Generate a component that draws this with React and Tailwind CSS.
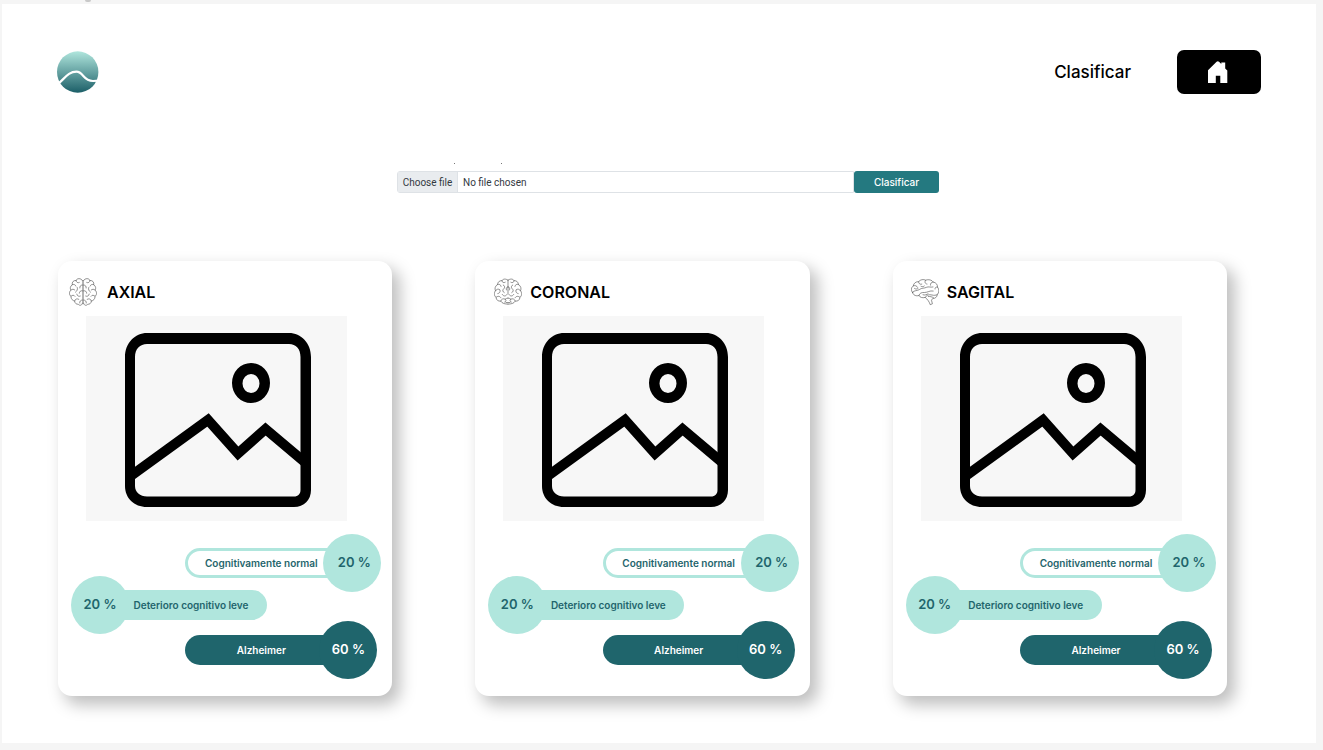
import React from "react";

function Logo() {
  return (
    <svg viewBox="0 0 42 42" className="size-[42px]" role="img" aria-label="Inicio">
      <defs>
        <linearGradient id="logo-fill" x1="0" y1="0" x2="0" y2="1">
          <stop offset="0" stopColor="#b0e6dd" />
          <stop offset="1" stopColor="#1c5f68" />
        </linearGradient>
      </defs>
      <circle cx="20.700" cy="21" r="20.700" fill="url(#logo-fill)" />
      <path
        d="M1 33C8 27 11.5 20.700 19.500 20.700C26.500 20.700 26 30 36 30L42 29.700"
        fill="none"
        stroke="#fff"
        strokeWidth="2.200"
      />
    </svg>
  );
}

function HomeIcon() {
  return (
    <svg viewBox="0 0 20 22" className="h-[22px] w-5" fill="#fff" aria-hidden="true">
      <path d="M0 9.300L8.600 .7Q9.800-.4 11 .7L13.300 3V1.600H17.200V7.500L19.300 9.600V22H12.300V14.700H7.800V22H0Z" />
    </svg>
  );
}

const brainProps = {
  viewBox: "0 0 28 28",
  className: "size-7 shrink-0",
  fill: "none",
  stroke: "#4b4b4b",
  strokeWidth: "0.6",
  strokeLinecap: "round",
  strokeLinejoin: "round",
  "aria-hidden": true,
};

function AxialHalf() {
  return (
    <>
      <path d="M13.400 2.500C12-.2 7.700.2 7.100 2.500C4.400 2.200 2.600 4.400 3.300 6.700C1.100 8.100.9 10.600 1.900 12.200C-.2 13.800.2 17.300 2 18.300C1.800 21.200 4 22.800 5.600 22.900C5.800 25.300 7.500 26.500 9.200 26.200C10.600 28.100 13.300 27.400 13.400 25.200" />
      <path d="M7.100 2.500C7.200 4.300 8.700 5.300 10.300 4.500M3.300 6.700C4.700 5.900 6.300 6.500 6.900 8.100M13.500 7C11.500 7 10.600 8.300 10.800 10M1.900 12.200C3 10.800 4.800 11 5.800 12M8.300 9.500C9 11.500 8 13 6.500 14.200M13.500 12.800C11.600 12.400 10.300 13.500 10.300 15.200M2 18.300C3.200 16.700 5.100 16.900 6 18.300M7.800 16.100C8 18 9.700 18.800 11.300 18.100M5.600 22.900C6.100 20.900 8.100 20.300 9.800 21.300M13.400 22C11.600 22 10.300 23.500 10.700 25" />
    </>
  );
}

function AxialIcon() {
  return (
    <svg {...brainProps}>
      <AxialHalf />
      <g transform="translate(28 0) scale(-1 1)">
        <AxialHalf />
      </g>
      <path d="M14 2.500V25.500" strokeWidth="1" stroke="#6b6b6b" />
    </svg>
  );
}

function CoronalHalf() {
  return (
    <>
      <path d="M14 2.200C11.700.4 9 .8 7.900 2.700C5.400 2.500 3.600 4.200 3.600 6.500C1.200 7.800.4 10.600 1.500 12.800C-.4 15.100.3 18.200 2.100 19.300C2.200 22.100 4.400 23.600 6.700 23C8.100 25.600 11 26.100 14 26.100" />
      <path d="M7.900 2.700C8 4.500 9.700 5.200 11.200 4.300M3.600 6.500C5.300 5.800 6.900 6.700 7.100 8.400M1.500 12.800C2.300 11 4.600 10.600 6 11.900C6.500 13.900 5.500 15.400 3.800 15.600M9.300 7C10.900 7.600 11.100 9.600 9.800 10.800C8.300 11.800 8.400 13.900 10.200 14.600M14 8.800C12.300 9 11.700 10.500 12.500 12M2.100 19.300C3.600 17.700 6.200 18 6.900 19.800M8.300 16.500C9.400 18.500 11.800 18.500 12.800 16.700M6.700 23C7.200 21 9.600 20.200 11.200 21.200C12.500 22 12.200 23.700 10.700 24.100M14 20C12.800 20 12 20.700 11.200 21.200" />
    </>
  );
}

function CoronalIcon() {
  return (
    <svg {...brainProps}>
      <CoronalHalf />
      <g transform="translate(28 0) scale(-1 1)">
        <CoronalHalf />
      </g>
      <path d="M14 2.200V16M12 24.500H16" />
    </svg>
  );
}

function SagitalIcon() {
  return (
    <svg {...brainProps}>
      <path d="M1.500 14.300C-.5 12.400.3 9.200 2.300 7.900C2.500 5.200 5.200 3.400 7.600 3.700C9.300 1.500 12.500 1 14.700 2.200C17.500 1 21 2 22.300 4.100C25 4.500 26.700 6.700 26.500 9.100C28.400 11.300 28.300 14.700 26.300 16.500C26.200 19 24 20.700 21.700 20.500L20.500 22.200L21.400 25.800L19.200 26.700C18.500 24 16.500 21.300 14.200 19.400C11.400 20.200 8.800 19.400 8 17.500C5.200 18.400 1.900 17.300 1.500 14.300Z" />
      <path d="M2.300 7.900C4 7 6 7.800 6.500 9.300M7.600 3.700C7.400 5.500 9 6.800 10.800 6.200M14.700 2.200C13.200 3.700 14 5.900 16 6.100M22.300 4.100C20.300 4.100 19 5.500 19.500 7.200M1.500 14.300C3.200 12 6.300 13.100 8.500 11.500C10.500 9.700 13.500 10.500 15.500 9.300C17.500 8.300 19.600 9.600 22 9M8 17.500C8.200 15 11 14.300 13.500 14.500C16.500 14.600 18.500 12.300 22.200 13M26.500 9.100C25 8.600 23.800 9.700 24 11M14.200 19.400C15 17.300 18 16.100 21 17C23 17.500 25 17.500 26.300 16.500M12 16.800C14 17.500 15.700 16.500 17 15.800M17.300 18.500C19 18.300 21 18.800 22.500 19.700M3.500 10.500C4.500 11.300 6 11.200 7 10.500M10 8.300C11 8.900 12.500 8.800 13.300 8" />
    </svg>
  );
}

function ImagePlaceholder() {
  return (
    <svg viewBox="0 0 261 205" className="h-[205px] w-[261px] bg-[#f7f7f7]" role="img" aria-label="Imagen">
      <g transform="translate(38 17)">
        <path
          fillRule="evenodd"
          d="M23 0H165C177 0 187 10 187 24V157C187 167 180 174 170 174H23C10 174 1 165 1 153V24C1 10 11 0 23 0ZM23 11C16 11 11 16 11 24V153C11 159 16 163.500 23 163.500H170C174 163.500 176.500 161 176.500 157V24C176.500 16 172 11 165 11Z"
        />
        <path
          fillRule="evenodd"
          d="M127 30A19 20 0 1 0 127 70A19 20 0 1 0 127 30ZM127 41A8.500 9.500 0 1 1 127 60A8.500 9.500 0 1 1 127 41Z"
        />
        <path
          d="M6 143.500L84 87L114 120.500L141.500 96L183 131"
          fill="none"
          stroke="#000"
          strokeWidth="10"
        />
      </g>
    </svg>
  );
}

function ResultCard({ title, icon, heading, normal, leve, alzheimer }) {
  return (
    <article className="h-[435px] min-w-[334px] rounded-[14px] bg-white pt-[17px] shadow-[7px_8px_16px_1px_rgba(0,0,0,0.25)]">
      <h2 className={`flex h-7 items-center text-[16px] font-semibold ${heading}`}>
        {icon}
        {title}
      </h2>
      <div className="mt-[10px] pl-7">
        <ImagePlaceholder />
      </div>
      <dl className="pt-[13px] text-[10px] font-semibold text-[#1f656c]">
        <div className="flex items-center justify-end pr-[11px]">
          <dt className="-mr-[30px] flex h-[30px] w-[168px] items-center justify-center rounded-full border-[3px] border-[#b0e6dd] pr-4 whitespace-nowrap">
            Cognitivamente normal
          </dt>
          <dd className="z-10 flex size-[58px] items-center justify-center rounded-full bg-[#b0e6dd] pl-1 text-[13px]">
            {normal} %
          </dd>
        </div>
        <div className="-mt-4 flex flex-row-reverse items-center justify-end pl-[13px]">
          <dt className="-ml-[30px] flex h-[30px] w-[168px] items-center justify-center rounded-full bg-[#b0e6dd] pl-4 whitespace-nowrap">
            Deterioro cognitivo leve
          </dt>
          <dd className="z-10 flex size-[58px] items-center justify-center rounded-full bg-[#b0e6dd] text-[13px]">
            {leve} %
          </dd>
        </div>
        <div className="-mt-[13px] flex items-center justify-end pr-[15px] text-white">
          <dt className="-mr-[30px] flex h-[30px] w-[164px] items-center justify-center rounded-full bg-[#1f656c] pr-3">
            Alzheimer
          </dt>
          <dd className="z-10 flex size-[58px] items-center justify-center rounded-full bg-[#1f656c] text-[13px]">
            {alzheimer} %
          </dd>
        </div>
      </dl>
    </article>
  );
}

const cards = [
  { title: "AXIAL", icon: <AxialIcon />, heading: "gap-[10px] pl-[11px]" },
  { title: "CORONAL", icon: <CoronalIcon />, heading: "gap-2 pl-[19px]" },
  { title: "SAGITAL", icon: <SagitalIcon />, heading: "gap-2 pl-[18px]" },
];

export default function App() {
  return (
    <div className="min-h-screen bg-[#f5f5f5] pr-[7px] pb-[7px] pl-0.5 font-['Inter',sans-serif] text-black">
      <div className="h-1 pl-[83px]">
        <div className="h-0.5 w-[6px] rounded-b-full bg-[#c8c8c8]" />
      </div>
      <div className="bg-white pb-[47px]">
        <header className="flex items-center justify-between pt-[46px] pr-[55px] pl-[55px]">
          <a href="#inicio" className="block">
            <Logo />
          </a>
          <nav className="flex items-center gap-[46px]">
            <a href="#clasificar" className="text-[17px] leading-6 font-medium">
              Clasificar
            </a>
            <a
              href="#inicio"
              aria-label="Inicio"
              className="flex h-11 w-[84px] items-center justify-center rounded-[7px] bg-black pr-[3px]"
            >
              <HomeIcon />
            </a>
          </nav>
        </header>

        <main>
          <div className="pt-[69px] pl-[18px]">
            <form className="mx-auto max-w-[542px]" onSubmit={(e) => e.preventDefault()}>
              <div className="flex h-2 gap-[46px] pl-[57px]">
                <span className="size-px bg-[#777777]" />
                <span className="size-px bg-[#777777]" />
              </div>
              <div className="flex h-[22px]">
                <label className="relative flex min-w-0 flex-1 cursor-pointer items-stretch rounded-l-[3px] border border-[#dee2e6] font-['Roboto',sans-serif] text-[10px] text-[#33393f] focus-within:border-[#247980]">
                  <input type="file" className="sr-only" />
                  <span className="flex w-[60px] items-center justify-center border-r border-[#dee2e6] bg-[#e9ecef]">
                    Choose file
                  </span>
                  <span className="flex items-center pl-[5px]">No file chosen</span>
                </label>
                <button
                  type="submit"
                  className="w-[85px] rounded-[3px] bg-[#247980] text-[10px] font-medium text-white"
                >
                  Clasificar
                </button>
              </div>
            </form>
          </div>

          <section className="grid grid-cols-[repeat(auto-fit,minmax(334px,1fr))] gap-[83px] pt-[68px] pr-[89px] pl-14">
            {cards.map((card) => (
              <ResultCard key={card.title} {...card} normal={20} leve={20} alzheimer={60} />
            ))}
          </section>
        </main>
      </div>
    </div>
  );
}
